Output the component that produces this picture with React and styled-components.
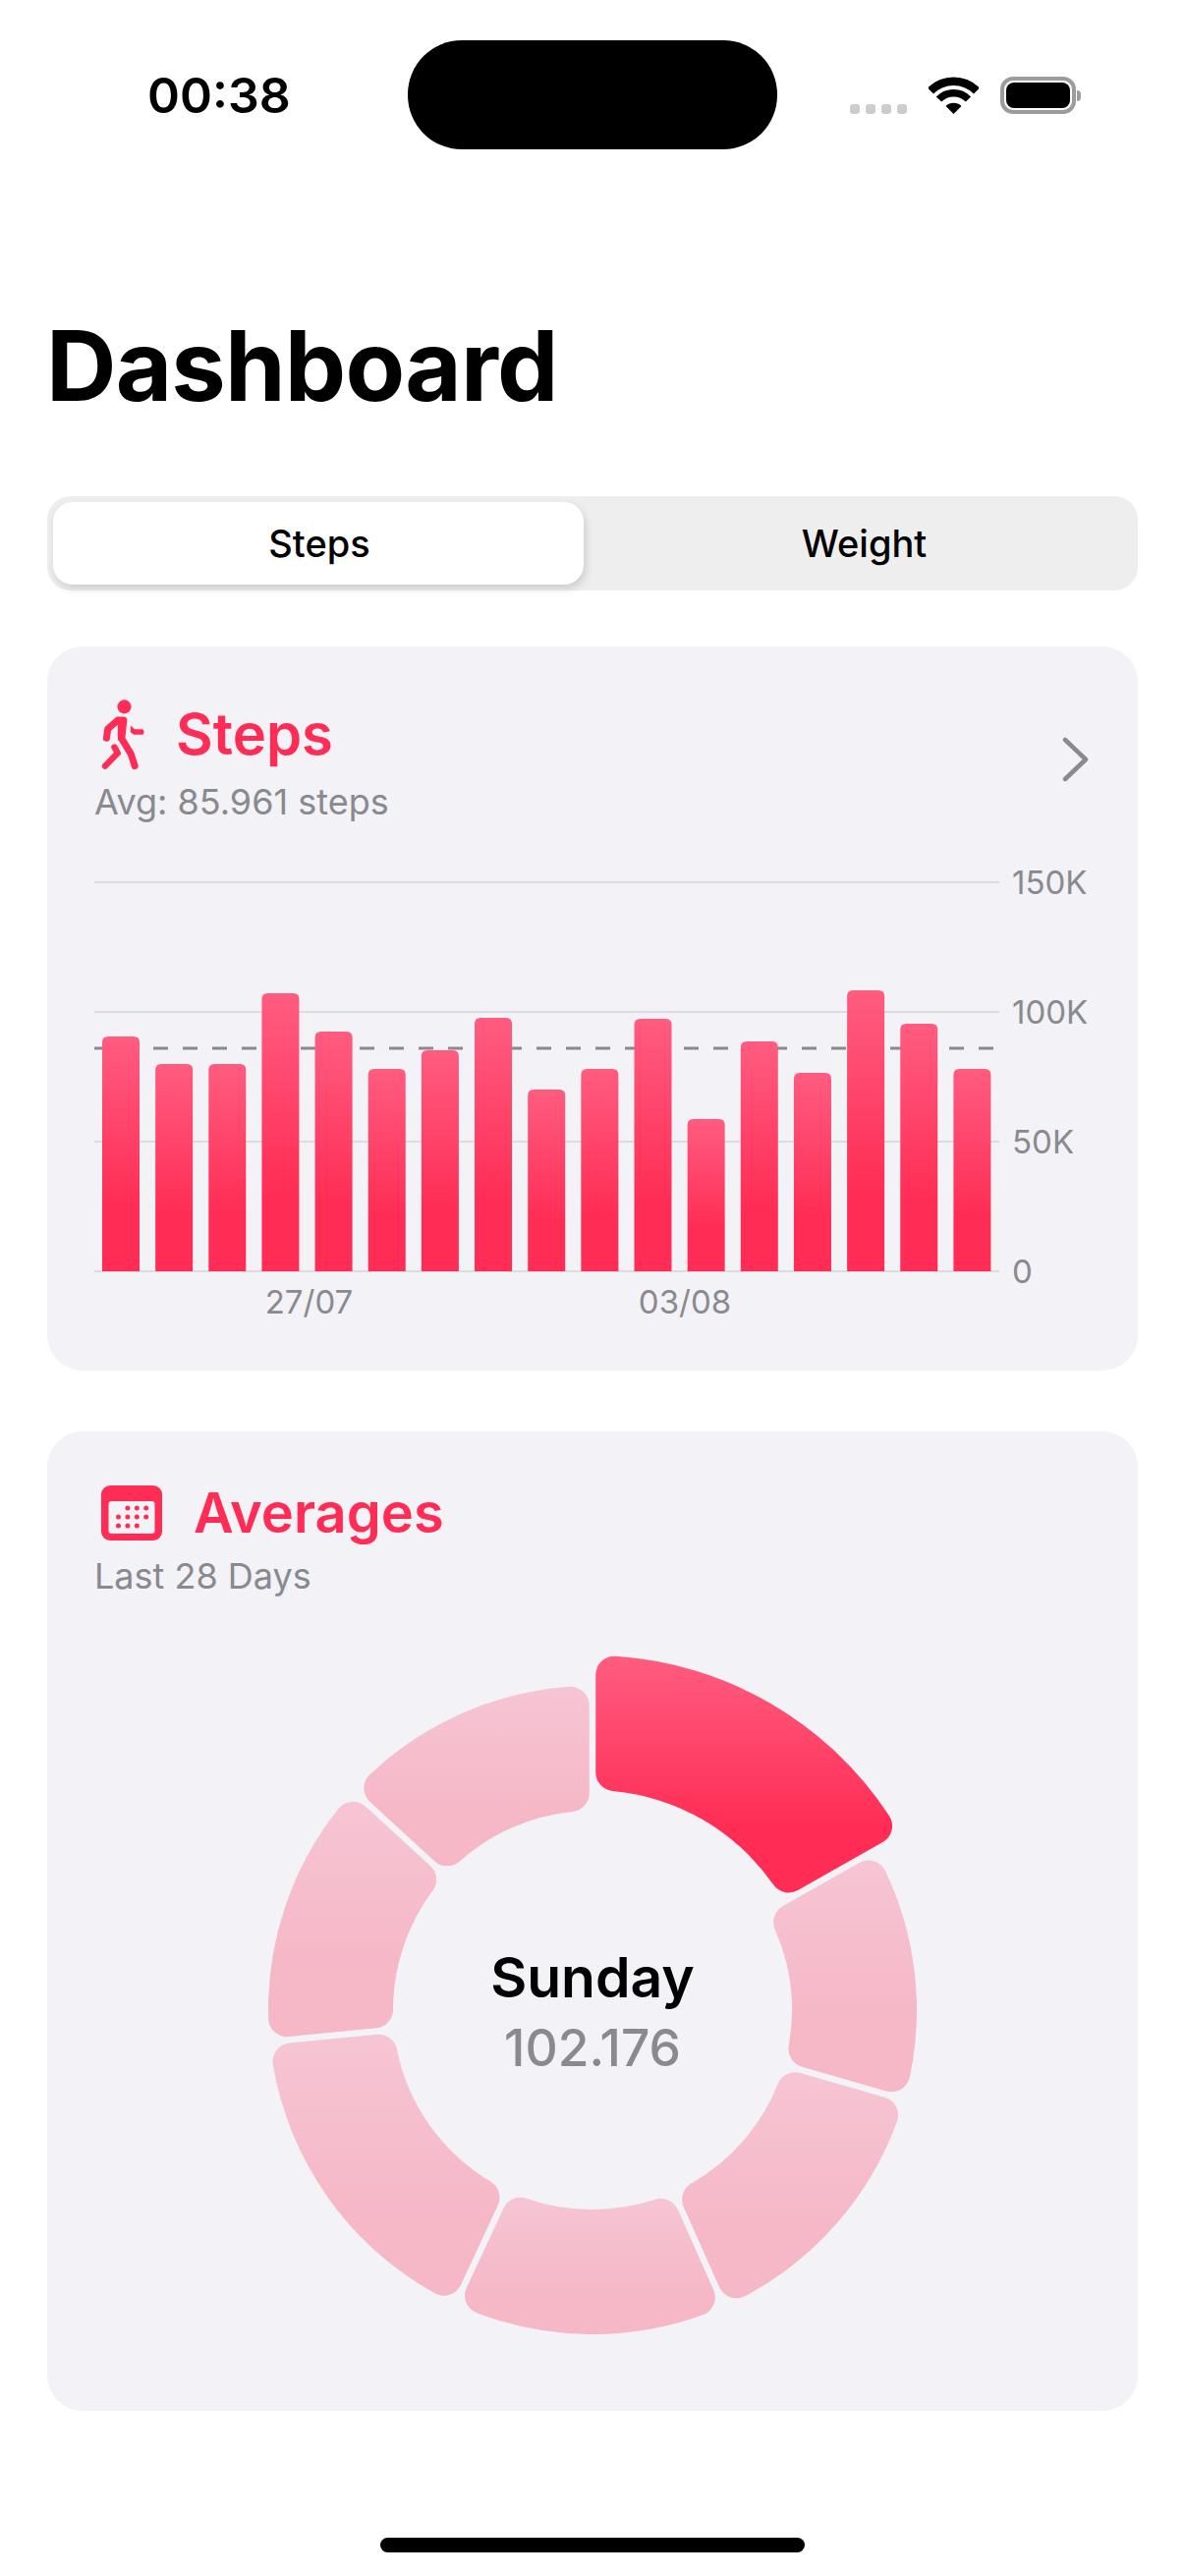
import React from 'react'
import styled, { createGlobalStyle } from 'styled-components'

const pink = '#ff2d55'
const grey = '#8a8a8e'

const GlobalStyle = createGlobalStyle`
  html, body {
    margin: 0;
    background: #fff;
    font-family: Inter, "Liberation Sans", sans-serif;
  }
`

const Screen = styled.div`
  position: relative;
  width: 1206px;
  height: 2622px;
  overflow: hidden;
  background: #fff;
`

const StatusBar = styled.div`
  display: grid;
  grid-template-columns: 415px 376px 1fr;
  height: 152px;
  padding-top: 41px;
  box-sizing: border-box;
`

const Time = styled.div`
  padding-left: 150px;
  padding-top: 26px;
  font-size: 50px;
  line-height: 60px;
  font-weight: 600;
  color: #000;
`

const Island = styled.div`
  height: 111px;
  border-radius: 55px;
  background: #000;
`

const StatusIcons = styled.div`
  display: flex;
  align-items: flex-end;
  height: 75px;
  padding-left: 74px;
`

const SignalDots = styled.div`
  display: flex;
  gap: 6px;
  margin-right: 22px;
`

const SignalDot = styled.span`
  width: 10px;
  height: 10px;
  border-radius: 3px;
  background: #cdcdcd;
`

const Battery = styled.div`
  position: relative;
  width: 77px;
  height: 38px;
  margin-left: 22px;
  box-sizing: border-box;
  border: 4px solid #9c9c9c;
  border-radius: 13px;
  padding: 2px;
  &::before {
    content: '';
    display: block;
    height: 100%;
    border-radius: 8px;
    background: #000;
  }
  &::after {
    content: '';
    position: absolute;
    left: 74px;
    top: 10px;
    width: 4px;
    height: 11px;
    border-radius: 0 5px 5px 0;
    background: #9c9c9c;
  }
`

const Title = styled.h1`
  margin: 160px 0 0 47px;
  font-size: 99px;
  line-height: 120px;
  font-weight: 700;
  letter-spacing: -0.8px;
  color: #000;
`

const Content = styled.main`
  display: flex;
  flex-direction: column;
  margin: 0 48px;
`

const Segmented = styled.div`
  display: grid;
  grid-template-columns: 540px 1fr;
  margin-top: 73px;
  height: 96px;
  padding: 6px;
  box-sizing: border-box;
  border-radius: 24px;
  background: #eeeeef;
`

const Segment = styled.div`
  display: flex;
  align-items: center;
  justify-content: center;
  padding-left: ${props => (props.$active ? 2 : 13)}px;
  border-radius: 20px;
  font-size: 38px;
  font-weight: 500;
  color: #000;
  background: ${props => (props.$active ? '#fff' : 'transparent')};
  box-shadow: ${props => (props.$active ? '2px 4px 8px rgba(0, 0, 0, 0.14)' : 'none')};
`

const Card = styled.section`
  border-radius: 36px;
  background: #f2f2f7;
  padding: ${props => props.$top}px 48px 0;
  height: ${props => props.$height}px;
  box-sizing: border-box;
  margin-top: ${props => props.$gap}px;
`

const CardHeader = styled.header`
  display: flex;
  align-items: center;
  justify-content: space-between;
`

const TitleRow = styled.div`
  display: flex;
  align-items: center;
`

const CardTitle = styled.h2`
  margin: 0 0 0 ${props => props.$gap}px;
  font-size: ${props => props.$size}px;
  line-height: 70px;
  font-weight: 600;
  color: ${pink};
`

const CardSub = styled.div`
  margin-top: ${props => props.$gap}px;
  font-size: 36px;
  line-height: 42px;
  font-weight: 400;
  color: ${grey};
`

const Chart = styled.svg`
  display: block;
  margin-top: 33px;
  text {
    font-family: Inter, "Liberation Sans", sans-serif;
    font-size: 33px;
    fill: ${grey};
  }
`

const Donut = styled.div`
  position: relative;
  width: 760px;
  height: 760px;
  margin: 41px auto 0;
  svg {
    display: block;
  }
`

const DonutCenter = styled.div`
  position: absolute;
  inset: 0;
  display: flex;
  flex-direction: column;
  align-items: center;
  justify-content: center;
`

const DonutDay = styled.div`
  font-size: 57px;
  line-height: 70px;
  font-weight: 600;
  color: #000;
`

const DonutValue = styled.div`
  margin-top: 5px;
  font-size: 51.5px;
  line-height: 62px;
  font-weight: 500;
  color: ${grey};
`

const HomeIndicator = styled.div`
  position: absolute;
  left: 387px;
  top: 2583px;
  width: 432px;
  height: 15px;
  border-radius: 8px;
  background: #000;
`

const IconBox = styled.svg`
  display: block;
  flex: none;
  margin-left: ${props => props.$left}px;
`

const ChevronBox = styled.svg`
  display: block;
  flex: none;
  margin: 0 1px 3px 0;
`

const WifiIcon = () => (
  <svg width="51" height="38" viewBox="0 0 51 38">
    <path d="M2 14.5 A33 33 0 0 1 49 14.5" fill="none" stroke="#000" strokeWidth="8.5" />
    <path d="M10.5 23 A21 21 0 0 1 40.5 23" fill="none" stroke="#000" strokeWidth="7.5" />
    <path d="M25.5 38 L17.5 30 A11.5 11.5 0 0 1 33.5 30 Z" fill="#000" />
  </svg>
)

const WalkIcon = () => (
  <IconBox $left={6} width="50" height="72" viewBox="65 60 145 215">
    <circle cx="136" cy="85" r="21" fill={pink} />
    <path
      d="M82 180 L86 152 L116 126 L134 126 L128 182 L156 228 L168 265"
      fill="none"
      stroke={pink}
      strokeWidth="21"
      strokeLinecap="round"
      strokeLinejoin="round"
    />
    <path d="M116 126 L140 126 L136 192 L116 186 Z" fill={pink} />
    <path d="M106 208 L116 226 L78 265" fill="none" stroke={pink} strokeWidth="19" strokeLinecap="round" strokeLinejoin="round" />
    <path d="M155 142 L168 153 L192 153 Q200 161 192 170 L166 170 L155 163 Z" fill={pink} />
  </IconBox>
)

const CalendarIcon = () => {
  const dots = [
    [0, 1], [0, 2], [0, 3],
    [1, 0], [1, 1], [1, 2], [1, 3],
    [2, 0], [2, 1], [2, 2]
  ]
  return (
    <IconBox $left={7} width="62" height="56" viewBox="0 0 62 56">
      <rect width="62" height="56" rx="9" fill={pink} />
      <rect x="7.5" y="16" width="47" height="33" rx="3" fill="#f2f2f7" />
      {dots.map(([row, col]) => (
        <circle key={`${row}-${col}`} cx={17.5 + col * 9.4} cy={23 + row * 9} r="2.5" fill={pink} />
      ))}
    </IconBox>
  )
}

const Chevron = () => (
  <ChevronBox width="30" height="50" viewBox="0 0 30 50">
    <path d="M5 5 L26 25 L5 45" fill="none" stroke={grey} strokeWidth="4.5" strokeLinecap="round" strokeLinejoin="round" />
  </ChevronBox>
)

// bar tops in page pixels, chart y 0 sits at page y 880
const barTops = [1055, 1083, 1083, 1011, 1050, 1088, 1069, 1036, 1109, 1088, 1037, 1139, 1060, 1092, 1008, 1042, 1088]
const BASE = 414
const gridLines = [
  { y: 18, label: '150K' },
  { y: 150, label: '100K' },
  { y: 282, label: '50K' },
  { y: 414, label: '0' }
]

const barPath = (x, top) => {
  const w = 38
  const r = 6
  return `M${x} ${BASE} V${top + r} Q${x} ${top} ${x + r} ${top} H${x + w - r} Q${x + w} ${top} ${x + w} ${top + r} V${BASE} Z`
}

const StepsChart = () => (
  <Chart width="1062" height="480" viewBox="0 -10 1062 480">
    <defs>
      <linearGradient id="barFill" x1="0" y1="0" x2="0" y2="1">
        <stop offset="0" stopColor="#ff5c80" />
        <stop offset="0.72" stopColor={pink} />
      </linearGradient>
    </defs>
    {gridLines.map(line => (
      <g key={line.label}>
        <rect x="0" y={line.y - 1} width="921" height="2" fill="#dbdbe0" />
        <text x="934" y={line.y + 12}>{line.label}</text>
      </g>
    ))}
    <line x1="0" y1="187" x2="915" y2="187" stroke={grey} strokeWidth="3" strokeDasharray="15 15" />
    {barTops.map((top, i) => (
      <path key={i} d={barPath(8 + i * 54.15, top - 880)} fill="url(#barFill)" />
    ))}
    <text x="218.5" y="457" textAnchor="middle">27/07</text>
    <text x="601" y="457" textAnchor="middle">03/08</text>
  </Chart>
)

const sectorPath = (cx, cy, R, r, a0, a1, gap, c) => {
  const corner = (deg, D, side, radius) => {
    const th = (deg * Math.PI) / 180
    const u = [Math.sin(th), -Math.cos(th)]
    const n = [Math.cos(th), Math.sin(th)]
    const s = gap / 2 + c
    const t = Math.sqrt(D * D - s * s)
    const C = [t * u[0] + side * s * n[0], t * u[1] + side * s * n[1]]
    return {
      edge: [cx + t * u[0] + (side * gap * n[0]) / 2, cy + t * u[1] + (side * gap * n[1]) / 2],
      arc: [cx + (C[0] / D) * radius, cy + (C[1] / D) * radius]
    }
  }
  const os = corner(a0, R - c, 1, R)
  const oe = corner(a1, R - c, -1, R)
  const is = corner(a0, r + c, 1, r)
  const ie = corner(a1, r + c, -1, r)
  const pt = p => `${p[0].toFixed(2)} ${p[1].toFixed(2)}`
  const bend = `A${c} ${c} 0 0 1`
  return [
    `M${pt(os.arc)}`,
    `A${R} ${R} 0 0 1 ${pt(oe.arc)}`,
    `${bend} ${pt(oe.edge)}`,
    `L${pt(ie.edge)}`,
    `${bend} ${pt(ie.arc)}`,
    `A${r} ${r} 0 0 0 ${pt(is.arc)}`,
    `${bend} ${pt(is.edge)}`,
    `L${pt(os.edge)}`,
    `${bend} ${pt(os.arc)}`,
    'Z'
  ].join(' ')
}

const slices = [
  [60.5, 106],
  [106, 156],
  [156, 205],
  [205, 264.4],
  [264.4, 312.5],
  [312.5, 360]
]

const AveragesDonut = () => (
  <Donut>
    <svg width="760" height="760" viewBox="0 0 760 760">
      <defs>
        <linearGradient id="sliceFill" x1="0" y1="0" x2="0" y2="1">
          <stop offset="0" stopColor="#ff5c80" />
          <stop offset="0.72" stopColor={pink} />
        </linearGradient>
      </defs>
      <path d={sectorPath(380, 380, 361, 224, 0, 60.5, 6.5, 19)} fill="url(#sliceFill)" />
      {slices.map(([from, to]) => (
        <path key={from} d={sectorPath(380, 380, 330, 203, from, to, 6.5, 19)} fill="url(#sliceFill)" opacity="0.3" />
      ))}
    </svg>
    <DonutCenter>
      <DonutDay>Sunday</DonutDay>
      <DonutValue>102.176</DonutValue>
    </DonutCenter>
  </Donut>
)

export default function App() {
  return (
    <Screen>
      <GlobalStyle />
      <StatusBar>
        <Time>00:38</Time>
        <Island />
        <StatusIcons>
          <SignalDots>
            <SignalDot />
            <SignalDot />
            <SignalDot />
            <SignalDot />
          </SignalDots>
          <WifiIcon />
          <Battery />
        </StatusIcons>
      </StatusBar>
      <Title>Dashboard</Title>
      <Content>
        <Segmented>
          <Segment $active>Steps</Segment>
          <Segment>Weight</Segment>
        </Segmented>
        <Card $top={53} $height={737} $gap={57}>
          <CardHeader>
            <div>
              <TitleRow>
                <WalkIcon />
                <CardTitle $gap={27} $size={58}>Steps</CardTitle>
              </TitleRow>
              <CardSub $gap={12}>Avg: 85.961 steps</CardSub>
            </div>
            <Chevron />
          </CardHeader>
          <StepsChart />
        </Card>
        <Card $top={48} $height={997} $gap={62}>
          <TitleRow>
            <CalendarIcon />
            <CardTitle $gap={32} $size={56}>Averages</CardTitle>
          </TitleRow>
          <CardSub $gap={8}>Last 28 Days</CardSub>
          <AveragesDonut />
        </Card>
      </Content>
      <HomeIndicator />
    </Screen>
  )
}
